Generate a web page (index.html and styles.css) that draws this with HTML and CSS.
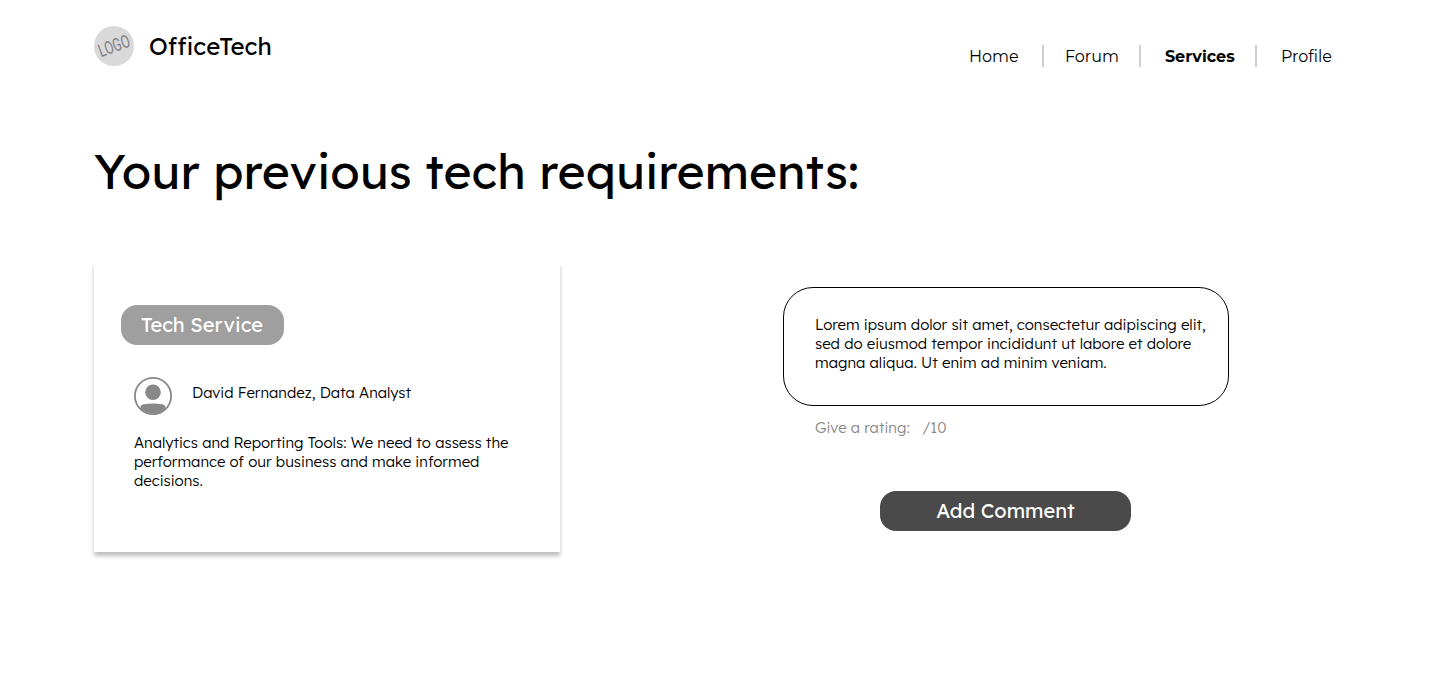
FILE: index.html
```html
<!DOCTYPE html>
<html lang="en">
<head>
<meta charset="utf-8">
<title>OfficeTech</title>
<link rel="stylesheet" href="styles.css">
</head>
<body>
<header class="header">
  <div class="brand">
    <div class="logo"><span class="logo-text">LOGO</span></div>
    <span class="brand-name">OfficeTech</span>
  </div>
  <nav class="nav">
    <a class="nav-link home">Home</a>
    <a class="nav-link forum">Forum</a>
    <a class="nav-link services">Services</a>
    <a class="nav-link profile">Profile</a>
  </nav>
</header>
<main>
  <h1 class="title">Your previous tech requirements:</h1>
  <div class="columns">
    <section class="card">
      <span class="badge">Tech Service</span>
      <div class="author">
        <svg class="avatar" viewBox="0 0 38 38">
          <circle cx="19" cy="19" r="18.1" fill="none" stroke="#888" stroke-width="1.8"/>
          <circle cx="19" cy="15.3" r="7.8" fill="#888"/>
          <path d="M6.6 31.5v-2.2Q7 27.6 9.5 27.3Q19 25.6 28.5 27.3Q31 27.6 31.4 29.3v2.2A18 18 0 0 1 6.6 31.5Z" fill="#888"/>
        </svg>
        <span class="author-name">David Fernandez, Data Analyst</span>
      </div>
      <p class="request">Analytics and Reporting Tools: We need to assess the<br>performance of our business and make informed<br>decisions.</p>
    </section>
    <section class="feedback">
      <div class="comment">Lorem ipsum dolor sit amet, consectetur adipiscing elit,<br>sed do eiusmod tempor incididunt ut labore et dolore<br>magna aliqua. Ut enim ad minim veniam.</div>
      <div class="rating"><span>Give a rating:</span><span>/10</span></div>
      <button class="add">Add Comment</button>
    </section>
  </div>
</main>
</body>
</html>
```
FILE: styles.css
```css
* { box-sizing: border-box; }
body {
  min-height: 682px;
  margin: 0;
  padding: 0 94px;
  background: #fff;
  color: #000;
  font-family: Lexend, "Lexend Deca", Inter, sans-serif;
  font-size: 15px;
  font-weight: 300;
  line-height: 19px;
}
.header {
  display: flex;
  justify-content: space-between;
  align-items: flex-start;
  height: 141px;
  padding-top: 26px;
}
.brand { display: flex; align-items: center; gap: 15px; }
.logo {
  display: flex;
  align-items: center;
  justify-content: center;
  width: 40px;
  height: 40px;
  border-radius: 50%;
  background: #d9d9d9;
}
.logo-text {
  font: 400 18px/20px Roboto, sans-serif;
  color: #808080;
  transform: rotate(-20deg) scaleX(0.7);
}
.brand-name { font-size: 24px; font-weight: 400; line-height: 30px; }
.nav {
  display: flex;
  margin: 19px 14px 0 0;
  font: 400 16px/20px Montserrat, "Open Sans", sans-serif;
}
.nav-link { height: 22px; padding-top: 2px; }
.nav-link + .nav-link { border-left: 2px solid #cfcfcf; }
.home { width: 73px; }
.forum { width: 97px; padding-left: 21px; }
.services { width: 116px; padding-left: 24px; font-weight: 700; }
.profile { padding-left: 24px; }
.title { margin: 0; font-size: 48px; font-weight: 400; line-height: 60px; }
.columns { display: flex; align-items: flex-start; margin-top: 61px; }
.card {
  width: 466px;
  height: 290px;
  padding: 43px 27px 0;
  box-shadow: 0 4px 4px rgba(0, 0, 0, 0.25);
}
.badge {
  display: block;
  width: 163px;
  height: 40px;
  padding-right: 1px;
  border-radius: 16px;
  background: #9f9f9f;
  color: #fff;
  font-size: 20px;
  font-weight: 400;
  line-height: 40px;
  text-align: center;
}
.author { display: flex; gap: 20px; margin: 32px 0 0 13px; }
.avatar { width: 38px; height: 38px; }
.author-name { padding-top: 6px; }
.request { margin: 18px 0 0 13px; white-space: nowrap; }
.feedback { width: 446px; margin: 25px 0 0 223px; }
.comment {
  height: 119px;
  padding: 27px 0 0 31px;
  border: 1px solid #000;
  border-radius: 30px;
  white-space: nowrap;
}
.rating { display: flex; gap: 12.5px; padding: 12px 0 0 32px; color: #888; }
.add {
  display: block;
  width: 251px;
  height: 40px;
  margin: 54px 0 0 97px;
  padding: 0;
  border: 0;
  border-radius: 16px;
  background: #4a4a4a;
  color: #fff;
  font: 400 20px/40px Lexend, "Lexend Deca", Inter, sans-serif;
}
```
